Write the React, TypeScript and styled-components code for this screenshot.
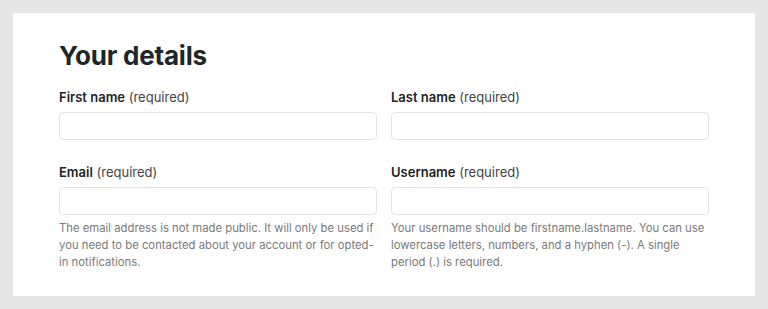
import React from "react"
import styled, {createGlobalStyle} from "styled-components"

const GlobalStyle = createGlobalStyle`
  html, body {
    margin: 0;
    padding: 0;
    background: #e5e5e5;
    font-family: Inter, "Noto Sans", sans-serif;
  }
`

const Page = styled.div`
  padding: 13px;
  width: 768px;
  height: 309px;
  box-sizing: border-box;
`

const Card = styled.section`
  background: #ffffff;
  box-sizing: border-box;
  width: 742px;
  height: 283px;
  padding: 27px 46px 0 46px;
`

const Title = styled.h1`
  margin: 0 0 16px 0;
  font-size: 26px;
  line-height: 32px;
  font-weight: 700;
  color: #1e2726;
  letter-spacing: -0.2px;
`

const Grid = styled.div`
  display: grid;
  grid-template-columns: 318px 318px;
  column-gap: 14px;
  row-gap: 23px;
`

const Field = styled.div`
  display: flex;
  flex-direction: column;
`

const Label = styled.label`
  font-size: 13px;
  line-height: 18px;
  color: #444;
  margin-bottom: 6px;

  strong {
    font-weight: 600;
    color: #1e2424;
  }
`

const Input = styled.input`
  box-sizing: border-box;
  height: 28px;
  width: 100%;
  border: 1px solid #e3e3e3;
  border-radius: 4px;
  background: #fff;
  padding: 0 8px;
  font: inherit;
  outline: none;
`

const Help = styled.p`
  margin: 5px 0 0 0;
  font-size: 11.3px;
  line-height: 17px;
  color: #7a7a7a;
`

type FieldProps = {name: string; help?: string}

function FormField({name, help}: FieldProps) {
  return (
    <Field>
      <Label>
        <strong>{name}</strong> (required)
      </Label>
      <Input type="text" />
      {help && <Help>{help}</Help>}
    </Field>
  )
}

export default function App() {
  return (
    <Page>
      <GlobalStyle />
      <Card>
        <Title>Your details</Title>
        <Grid>
          <FormField name="First name" />
          <FormField name="Last name" />
          <FormField
            name="Email"
            help="The email address is not made public. It will only be used if you need to be contacted about your account or for opted-in notifications."
          />
          <FormField
            name="Username"
            help="Your username should be firstname.lastname. You can use lowercase letters, numbers, and a hyphen (-). A single period (.) is required."
          />
        </Grid>
      </Card>
    </Page>
  )
}
